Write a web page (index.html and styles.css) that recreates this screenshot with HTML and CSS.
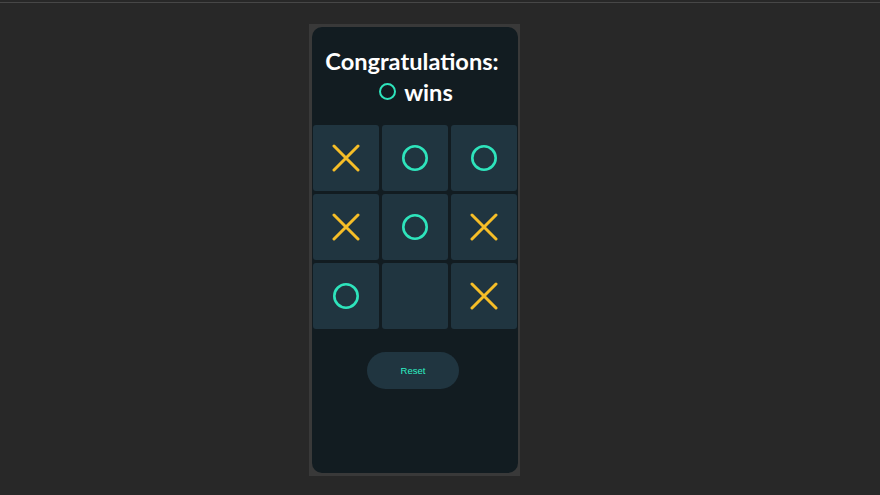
FILE: index.html
```html
<!DOCTYPE html>
<html>
<head>
<meta charset="utf-8">
<link rel="stylesheet" href="styles.css">
</head>
<body>
<div class="topline"></div>
<div class="frame">
  <div class="card">
    <h1 class="title">
      <span class="line">Congratulations:</span>
      <span class="line winner"><span class="mini-o"></span>wins</span>
    </h1>
    <div class="board">
      <div class="cell"><svg class="x" viewBox="0 0 28 28"><path d="M2 2L26 26M26 2L2 26"/></svg></div>
      <div class="cell"><svg class="o" viewBox="0 0 28 28"><circle cx="14" cy="14" r="11.7"/></svg></div>
      <div class="cell"><svg class="o" viewBox="0 0 28 28"><circle cx="14" cy="14" r="11.7"/></svg></div>
      <div class="cell"><svg class="x" viewBox="0 0 28 28"><path d="M2 2L26 26M26 2L2 26"/></svg></div>
      <div class="cell"><svg class="o" viewBox="0 0 28 28"><circle cx="14" cy="14" r="11.7"/></svg></div>
      <div class="cell"><svg class="x" viewBox="0 0 28 28"><path d="M2 2L26 26M26 2L2 26"/></svg></div>
      <div class="cell"><svg class="o" viewBox="0 0 28 28"><circle cx="14" cy="14" r="11.7"/></svg></div>
      <div class="cell"></div>
      <div class="cell"><svg class="x" viewBox="0 0 28 28"><path d="M2 2L26 26M26 2L2 26"/></svg></div>
    </div>
    <div class="actions">
      <button class="reset">Reset</button>
    </div>
  </div>
</div>
</body>
</html>
```
FILE: styles.css
```css
html, body {
  margin: 0;
  padding: 0;
  background: #282828;
  height: 100%;
  overflow: hidden;
}
.topline {
  margin-top: 2px;
  height: 1px;
  background: #474747;
}
.frame {
  margin: 21px 0 0 309px;
  width: 206px;
  padding: 3px 2px 3px 3px;
  background: #393939;
}
.card {
  height: 446px;
  background: #121c21;
  border-radius: 10px;
  display: flex;
  flex-direction: column;
  align-items: center;
}
.title {
  margin: 19px 6px 0 0;
  font-family: Lato, "Open Sans", sans-serif;
  font-weight: 700;
  font-size: 23.6px;
  line-height: 31px;
  color: #ffffff;
  text-align: center;
}
.line {
  display: block;
}
.winner {
  display: flex;
  align-items: center;
  justify-content: center;
  gap: 8px;
  margin-left: 8px;
}
.mini-o {
  width: 13px;
  height: 13px;
  border: 2.2px solid #2ee4bc;
  border-radius: 50%;
  margin-top: -2px;
}
.board {
  margin-top: 17px;
  display: grid;
  grid-template-columns: repeat(3, 66px);
  grid-auto-rows: 66px;
  gap: 3px;
}
.cell {
  background: #203540;
  border-radius: 3px;
  display: flex;
  align-items: center;
  justify-content: center;
}
.cell svg {
  width: 28px;
  height: 28px;
  fill: none;
}
.x path {
  stroke: #f6be27;
  stroke-width: 3;
  stroke-linecap: round;
}
.o circle {
  stroke: #2ee4bc;
  stroke-width: 2.6;
}
.actions {
  margin: 23px 4px 0 0;
}
.reset {
  width: 92px;
  height: 37px;
  border: none;
  border-radius: 19px;
  background: #203540;
  color: #2ef0c4;
  font-family: "Liberation Sans", Arial, sans-serif;
  font-size: 9.5px;
  cursor: pointer;
}
```
